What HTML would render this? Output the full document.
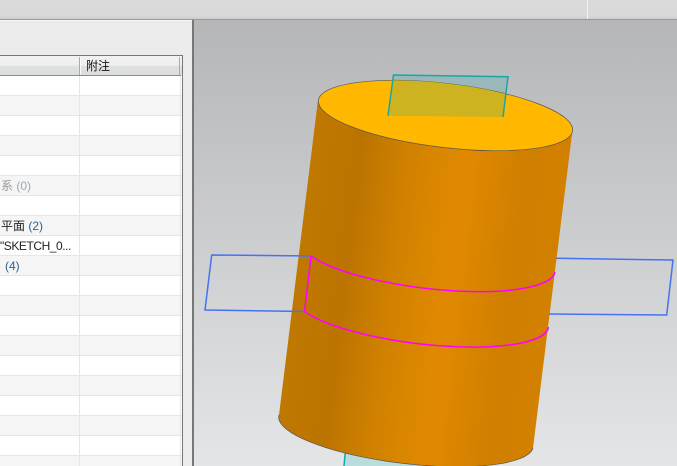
<!DOCTYPE html>
<html>
<head>
<meta charset="utf-8">
<style>
html,body{margin:0;padding:0;width:677px;height:466px;overflow:hidden;background:#c8c9cb}
#a{position:relative;width:677px;height:466px;overflow:hidden;font-family:"Liberation Sans","WenQuanYi Zen Hei",sans-serif}
#a div{position:absolute}
.t{font-size:12px;line-height:16px;white-space:nowrap;color:#222}
.b{color:#2b6296}
</style>
</head>
<body>
<div id="a">
<div style="left:0;top:0;width:677px;height:19px;background:linear-gradient(#dadada 0,#d9d9d9 80%,#cfcfcf 100%)"></div>
<div style="left:587px;top:0;width:1px;height:19px;background:#f2f2f2"></div>
<div style="left:0;top:19px;width:677px;height:1px;background:#989898"></div>
<div style="left:0;top:20px;width:192px;height:446px;background:#ebebeb"></div>
<div style="left:0;top:20px;width:192px;height:1px;background:#f7f7f7"></div>
<div style="left:192px;top:20px;width:2px;height:446px;background:#777"></div>

<svg style="position:absolute;left:194px;top:20px" width="483" height="446" viewBox="194 20 483 446">
<defs>
<linearGradient id="bg" x1="0" y1="20" x2="0" y2="466" gradientUnits="userSpaceOnUse">
<stop offset="0" stop-color="#b5b6b8"/><stop offset="1" stop-color="#e4e5e7"/>
</linearGradient>
<linearGradient id="cy" x1="285" y1="262" x2="565" y2="297" gradientUnits="userSpaceOnUse">
<stop offset="0" stop-color="#c07900"/><stop offset=".22" stop-color="#bc7400"/>
<stop offset=".40" stop-color="#d28200"/><stop offset=".57" stop-color="#e08900"/>
<stop offset=".62" stop-color="#df8800"/><stop offset=".8" stop-color="#d07f00"/>
<stop offset="1" stop-color="#d28000"/>
</linearGradient>
<clipPath id="top"><ellipse cx="445.5" cy="115.5" rx="128" ry="32" transform="rotate(6.8 445.5 115.5)"/></clipPath>
</defs>
<rect x="194" y="20" width="483" height="446" fill="url(#bg)"/>

<polygon points="393.5,75 508,76.7 503,117 388,115.7" fill="#9ab8b9"/>
<polygon points="346,440 344,466 480,466 480,440" fill="#b9dcdc"/>
<path d="M346,445L344,466" stroke="#18a6a6" stroke-width="1.5" fill="none"/>

<path d="M556,258.3L673,260L666.7,315L549,314" fill="none" stroke="#4672f2" stroke-width="1.5"/>

<path d="M318,100L279,415A128,32 6.8 0 0 533,448L572.5,130Z" fill="url(#cy)"/>
<path d="M279,415A128,32 6.8 0 0 533,448" fill="none" stroke="#555" stroke-width=".7"/>
<ellipse cx="445.5" cy="115.5" rx="128" ry="32" transform="rotate(6.8 445.5 115.5)" fill="#ffb700" stroke="#555" stroke-width=".7"/>

<polygon points="393.5,75 508,76.7 503,117 388,115.7" fill="#cdb31f" clip-path="url(#top)"/>
<path d="M388,115.7L393.5,75L508,76.7L503,117" fill="none" stroke="#18a6a6" stroke-width="1.5"/>

<path d="M304.5,311.5L205,310L211.7,255L311,256" fill="none" stroke="#4672f2" stroke-width="1.5"/>

<path d="M311,256A128,32 6.8 0 0 555,272" fill="none" stroke="#ff00ff" stroke-width="1.5"/>
<path d="M304.5,311.5A128,32 6.8 0 0 548.5,327" fill="none" stroke="#ff00ff" stroke-width="1.5"/>
<path d="M311,256L304.5,311.5" fill="none" stroke="#ff00ff" stroke-width="1.5"/>
</svg>

<div style="left:0;top:76px;width:182px;height:390px;background:repeating-linear-gradient(#fff 0,#fff 19px,#e6e6e6 19px,#e6e6e6 20px,#f5f5f5 20px,#f5f5f5 39px,#e6e6e6 39px,#e6e6e6 40px)"></div>
<div style="left:79px;top:76px;width:1px;height:390px;background:#e6e6e6"></div>
<div style="left:180px;top:76px;width:1px;height:390px;background:#e6e6e6"></div>
<div style="left:0;top:56px;width:182px;height:19px;background:linear-gradient(#f0f1f1 0,#eef0f0 50%,#dfe0e2 52%,#dcdddf 100%)"></div>
<div style="left:0;top:55px;width:183px;height:1px;background:#777"></div>
<div style="left:0;top:75px;width:181px;height:1px;background:#8a8a8a"></div>
<div style="left:182px;top:55px;width:1px;height:411px;background:#777"></div>
<div style="left:79px;top:57px;width:1px;height:18px;background:#a9abad"></div>
<div style="left:80px;top:57px;width:1px;height:18px;background:#fafafa"></div>
<div style="left:179px;top:57px;width:1px;height:18px;background:#a9abad"></div>

<div class="t" style="left:86px;top:58px;color:#111;font-family:'WenQuanYi Zen Hei','Noto Sans CJK SC',sans-serif">附注</div>
<div class="t" style="left:1px;top:178px;color:#999">系 <span style="color:#9aa9b8">(0)</span></div>
<div class="t" style="left:1px;top:218px">平面 <span class="b">(2)</span></div>
<div class="t" style="left:0;top:238px;letter-spacing:-.45px">"SKETCH_0...</div>
<div class="t b" style="left:5px;top:258px">(4)</div>
</div>
</body>
</html>
